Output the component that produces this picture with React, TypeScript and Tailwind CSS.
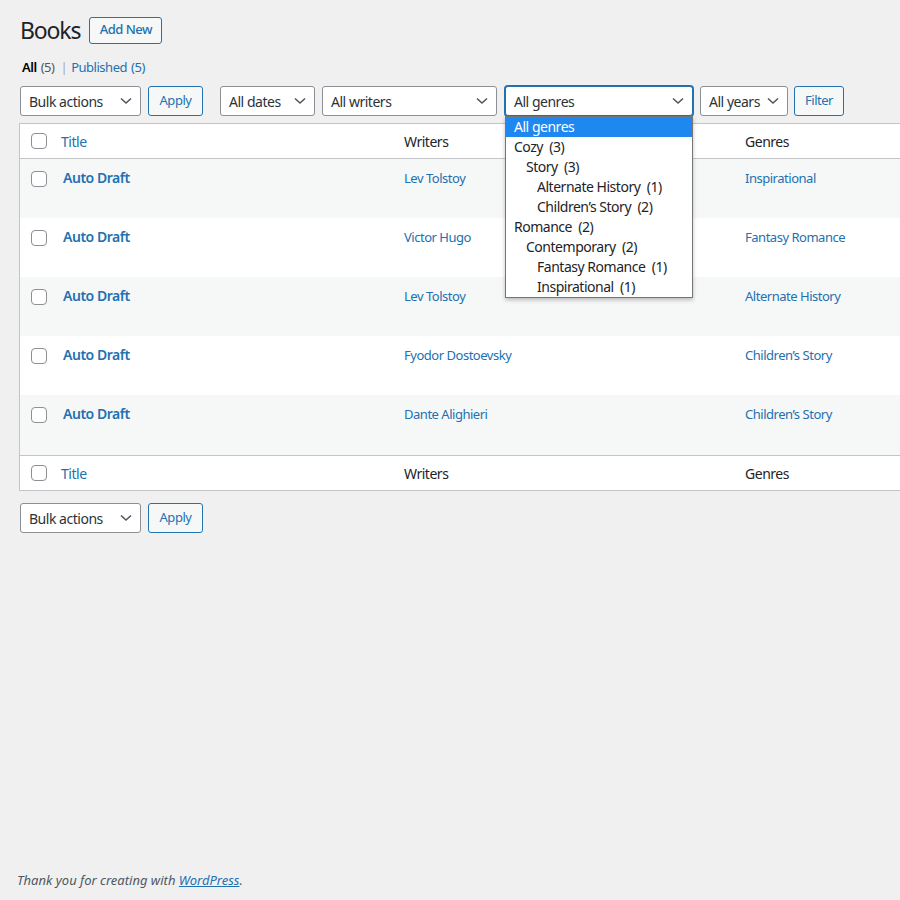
import React from "react";

const Chevron = () => (
  <svg width="12" height="8" viewBox="0 0 12 8" className="shrink-0">
    <path d="M1 1.5 L6 6 L11 1.5" fill="none" stroke="#50575e" strokeWidth="1.6" />
  </svg>
);

function Select({ label, w, focused }: { label: string; w: string; focused?: boolean }) {
  return (
    <div
      className={`${w} h-[30px] flex items-center justify-between pl-2 pr-2 rounded-[3px] bg-white text-[14px] text-[#2c3338] border ${
        focused ? "border-[#2271b1] shadow-[0_0_0_1px_#2271b1]" : "border-[#8c8f94]"
      }`}
    >
      <span>{label}</span>
      <Chevron />
    </div>
  );
}

function Button({ label, w }: { label: string; w: string }) {
  return (
    <div
      className={`${w} h-[30px] flex items-center justify-center rounded-[3px] border border-[#2271b1] bg-[#f6f7f7] text-[13px] text-[#2271b1]`}
    >
      {label}
    </div>
  );
}

const Checkbox = () => (
  <div className="w-4 h-4 rounded-[4px] border border-[#8c8f94] bg-white" />
);

const rows = [
  { writer: "Lev Tolstoy", genre: "Inspirational" },
  { writer: "Victor Hugo", genre: "Fantasy Romance" },
  { writer: "Lev Tolstoy", genre: "Alternate History" },
  { writer: "Fyodor Dostoevsky", genre: "Children\u2019s Story" },
  { writer: "Dante Alighieri", genre: "Children\u2019s Story" },
];

const options: { t: string; lvl: number }[] = [
  { t: "All genres", lvl: 0 },
  { t: "Cozy  (3)", lvl: 0 },
  { t: "Story  (3)", lvl: 1 },
  { t: "Alternate History  (1)", lvl: 2 },
  { t: "Children\u2019s Story  (2)", lvl: 2 },
  { t: "Romance  (2)", lvl: 0 },
  { t: "Contemporary  (2)", lvl: 1 },
  { t: "Fantasy Romance  (1)", lvl: 2 },
  { t: "Inspirational  (1)", lvl: 2 },
];

const cols = "grid grid-cols-[31px_343px_341px_341px_200px]";

function HeaderRow({ top }: { top?: boolean }) {
  return (
    <div
      className={`${cols} h-[35px] items-center bg-white ${
        top ? "border-b border-[#c3c4c7]" : "border-t border-[#c3c4c7]"
      }`}
    >
      <div className="pl-[11px] flex items-center">
        <Checkbox />
      </div>
      <div className="pl-[10px] text-[14px] text-[#2271b1]">Title</div>
      <div className="pl-[10px] text-[14px] text-[#1d2327]">Writers</div>
      <div className="pl-[10px] text-[14px] text-[#1d2327]">Genres</div>
      <div />
    </div>
  );
}

export default function App() {
  return (
    <div className="w-[900px] h-[900px] overflow-hidden bg-[#f0f0f1] flex flex-col font-['Noto_Sans',sans-serif] tracking-[-0.03em] text-[#3c434a]">
      <div className="pl-5 pt-[15px]">
        <div className="flex items-center h-[30px]">
          <h1 className="text-[23px] leading-[30px] text-[#1d2327] font-normal tracking-[-0.05em]">Books</h1>
          <div className="ml-[9px] w-[73px] h-[27px] flex items-center justify-center rounded-[3px] border border-[#2271b1] bg-[#f6f7f7] text-[13px] font-medium text-[#2271b1]">
            Add New
          </div>
        </div>

        <div className="mt-[13px] h-[20px] flex items-center text-[13px] pl-[2px]">
          <span className="text-black font-semibold">All</span>
          <span className="text-[#50575e] ml-1">(5)</span>
          <span className="text-[#a7aaad] ml-[6px] mr-[4px]">|</span>
          <span className="text-[#2271b1]">Published</span>
          <span className="text-[#2271b1] ml-1">(5)</span>
        </div>

        <div className="mt-[8px] h-[30px] flex items-center">
          <Select label="Bulk actions" w="w-[121px]" />
          <div className="ml-[7px]">
            <Button label="Apply" w="w-[55px]" />
          </div>
          <div className="ml-[17px]">
            <Select label="All dates" w="w-[95px]" />
          </div>
          <div className="ml-[7px]">
            <Select label="All writers" w="w-[175px]" />
          </div>
          <div className="ml-[8px] relative z-10">
            <Select label="All genres" w="w-[188px]" focused />
            <div className="absolute left-0 top-full w-[188px] bg-white border border-[#767676] shadow-[0_2px_4px_rgba(0,0,0,0.25)] text-[14px] text-[#1d2327]">
              {options.map((o, i) => (
                <div
                  key={i}
                  className={`h-[20px] leading-[20px] whitespace-pre ${
                    o.lvl === 0 ? "pl-[8px]" : o.lvl === 1 ? "pl-[20px]" : "pl-[31px]"
                  } ${i === 0 ? "bg-[#1e87f0] text-white" : ""}`}
                >
                  {o.t}
                </div>
              ))}
            </div>
          </div>
          <div className="ml-[7px]">
            <Select label="All years" w="w-[88px]" />
          </div>
          <div className="ml-[6px]">
            <Button label="Filter" w="w-[50px]" />
          </div>
        </div>

        <div className="mt-[7px] ml-[-1px] w-[1260px] border border-[#c3c4c7] bg-white">
          <HeaderRow top />
          {rows.map((r, i) => (
            <div
              key={i}
              className={`${cols} ${i === 4 ? "h-[60px]" : "h-[59px]"} ${
                i % 2 === 0 ? "bg-[#f6f7f7]" : "bg-white"
              }`}
            >
              <div className="pl-[11px] pt-[12px]">
                <Checkbox />
              </div>
              <div className="pl-[12px] pt-[9px] text-[14px] leading-[20px] font-semibold text-[#2271b1]">
                Auto Draft
              </div>
              <div className="pl-[10px] pt-[9px] text-[13px] leading-[20px] text-[#2271b1]">
                {r.writer}
              </div>
              <div className="pl-[10px] pt-[9px] text-[13px] leading-[20px] text-[#2271b1]">
                {r.genre}
              </div>
              <div />
            </div>
          ))}
          <HeaderRow />
        </div>

        <div className="mt-[12px] h-[30px] flex items-center">
          <Select label="Bulk actions" w="w-[121px]" />
          <div className="ml-[7px]">
            <Button label="Apply" w="w-[55px]" />
          </div>
        </div>
      </div>

      <div className="mt-auto pl-[17px] pb-[11px] text-[13px] italic tracking-normal text-[#50575e] leading-[18px]">
        Thank you for creating with{" "}
        <span className="text-[#2271b1] underline">WordPress</span>.
      </div>
    </div>
  );
}
